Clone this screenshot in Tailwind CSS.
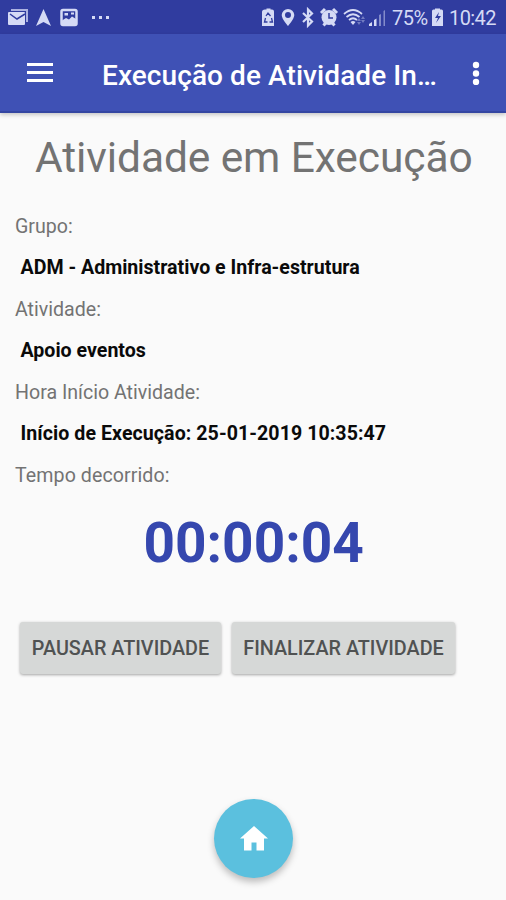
<!DOCTYPE html>
<html lang="pt-BR">
<head>
  <meta charset="UTF-8" />
  <meta name="viewport" content="width=device-width, initial-scale=1.0" />
  <title>Execução de Atividade</title>
  <script src="https://cdn.jsdelivr.net/npm/@tailwindcss/browser@4"></script>
</head>
<body class="bg-[#fafafa] font-['Roboto',sans-serif] whitespace-nowrap">
  <div class="relative w-[506px] h-[900px] overflow-hidden flex flex-col">

    <!-- Status bar -->
    <div class="h-[34px] shrink-0 bg-[#303c9f] text-[#d5daf5] flex items-center">
      <svg class="w-[120px] h-[34px]" viewBox="0 0 120 34" fill="currentColor">
        <path d="M11 9h17v13h-2V11H11z" opacity=".75" />
        <rect x="8" y="12" width="17" height="13" rx="1" />
        <path d="M10 14l7 5 8-5" fill="none" stroke="#303c9f" stroke-width="1.5" />
        <path d="M43.500 9l7.500 17-7.500-4-7.500 4z" />
        <rect x="61.500" y="10" width="15" height="15" rx="1.500" fill="none" stroke="currentColor" stroke-width="2.500" />
        <path d="M62 20.500l4-2.500 3 1.500 3-3 4 2.500v6H62z" />
        <path d="M64.500 13h3.500v2.500h-3.500zM71 12.500h3v2h-3z" />
        <rect x="92" y="16" width="3" height="3" />
        <rect x="99" y="16" width="3" height="3" />
        <rect x="106" y="16" width="3" height="3" />
      </svg>
      <svg class="ml-[140px] w-[130px] h-[34px]" viewBox="260 0 130 34" fill="currentColor">
        <path d="M265 9.500h1.500v-1h4v1h1.500q2 0 2 2V26h-12V12q0-2.500 3-2.500z" />
        <path d="M266 16l2-3 2.500 3M271.500 18l1 4h-3M267.500 22h-3l1-4" fill="none" stroke="#303c9f" stroke-width="1.300" />
        <path fill-rule="evenodd" d="M288 9a6.300 6.300 0 0 0-6.300 6c0 4 6.300 11 6.300 11s6.300-7 6.300-11a6.300 6.300 0 0 0-6.300-6zm0 3a3 3 0 1 1 0 6 3 3 0 0 1 0-6z" />
        <path d="M303 13l9 8.500-4 4V9.500l4 4-9 8.500" fill="none" stroke="currentColor" stroke-width="2.200" />
        <circle cx="329" cy="17.500" r="7.500" />
        <path d="M321 13l4-4M337 13l-4-4M323.500 25.500l2.500-3M334.500 25.500l-2.500-3" stroke="currentColor" stroke-width="3" />
        <path d="M329 13v5h4" fill="none" stroke="#303c9f" stroke-width="1.500" />
        <g fill="none" stroke="currentColor" stroke-width="1.700">
          <path d="M344 14q9-8 18 0M346.500 17q6.500-5.500 13 0M349 20q4-3.500 8 0" />
        </g>
        <path d="M350.500 22q2.500-2 5 0l-2.500 3z" />
        <path d="M359 18l2 3h-4zM359 25l-2-3h4zM363 16l2 3h-4zM363 23l-2-3h4z" opacity=".4" />
        <path d="M369 26v-2l3-2v4zM374 26v-6l2.500-1.500V26z" />
        <path d="M379 26V15l2-1v12zM383.500 26V11l1.500-1v16z" opacity=".5" />
      </svg>
      <span class="ml-[2px] w-[36px] pt-px text-[20px] tracking-[-0.5px]">75%</span>
      <svg class="ml-[3px] w-[14px] h-[34px]" viewBox="431 0 14 34" fill="currentColor">
        <path d="M435 9.500V8.500h5v1h1.500q1.500 0 1.500 1.500v15h-11V11q0-1.500 1.500-1.500z" />
        <path d="M439 12l-4 6h3l-2 5 5-7h-3z" fill="#303c9f" />
      </svg>
      <span class="ml-[4px] pt-px text-[20px] tracking-[-0.6px]">10:42</span>
    </div>

    <!-- Toolbar -->
    <header class="h-[79px] shrink-0 bg-[#3f51b5] text-white border-b-2 border-[#3446a2] shadow-[0_2px_4px_rgba(0,0,0,0.2)] flex items-center">
      <svg class="ml-[27px] w-[26px] h-[20px]" viewBox="0 0 26 20" fill="currentColor">
        <rect y="0" width="26" height="3" />
        <rect y="8" width="26" height="3" />
        <rect y="16" width="26" height="3" />
      </svg>
      <h1 class="ml-[49px] w-[338px] text-[28px] tracking-[0.08px] font-medium pt-[6px]">Execução de Atividade In…</h1>
      <svg class="ml-[32px] w-[8px] h-[24px]" viewBox="0 0 8 24" fill="currentColor">
        <circle cx="4" cy="4" r="3.200" />
        <circle cx="4" cy="12.500" r="3.200" />
        <circle cx="4" cy="21" r="3.200" />
      </svg>
    </header>

    <main class="flex flex-col text-[#737373]">
      <h2 class="pl-[35px] pt-[16px] h-[93px] text-[42.500px] tracking-[-0.1px] leading-[58px]">Atividade em Execução</h2>

      <dl class="pl-[15px] text-[19.600px]">
        <dt class="h-[41px] leading-[42px]">Grupo:</dt>
        <dd class="h-[42px] leading-[41px] pl-[5.500px] font-bold text-[#0a0a0a]">ADM - Administrativo e Infra-estrutura</dd>
        <dt class="h-[41px] leading-[42px]">Atividade:</dt>
        <dd class="h-[42px] leading-[41px] pl-[5.500px] font-bold text-[#0a0a0a]">Apoio eventos</dd>
        <dt class="h-[41px] leading-[42px]">Hora Início Atividade:</dt>
        <dd class="h-[42px] leading-[41px] pl-[5.500px] tracking-[0.06px] font-bold text-[#0a0a0a]">Início de Execução: 25-01-2019 10:35:47</dd>
        <dt class="h-[41px] leading-[42px] tracking-[0.08px]">Tempo decorrido:</dt>
      </dl>

      <p class="pt-[9px] h-[125px] pl-[143.500px] text-[55px] leading-[76px] font-bold text-[#3547ae]">00:00:04</p>

      <!-- Actions -->
      <div class="pl-[20px] pt-px flex gap-[11px] text-[19.800px] font-medium text-[#505252]">
        <button class="w-[201px] h-[52px] pt-[2px] rounded-[3px] bg-[#d6d8d7] shadow-[0_1px_3px_rgba(0,0,0,0.35)]">PAUSAR ATIVIDADE</button>
        <button class="w-[223px] h-[52px] pt-[2px] rounded-[3px] bg-[#d6d8d7] shadow-[0_1px_3px_rgba(0,0,0,0.35)]">FINALIZAR ATIVIDADE</button>
      </div>
    </main>

    <!-- Floating home button -->
    <button aria-label="Home" class="absolute left-[214px] top-[799px] size-[79px] rounded-full bg-[#5bc0de] shadow-[0_4px_7px_rgba(0,0,0,0.25)] flex items-center justify-center">
      <svg class="w-[28px] h-[25px] text-white" viewBox="0 0 28 25" fill="currentColor">
        <path d="M14 0L0 12.500h4V24.500h7.500V16.500h5V24.500H24V12.500h4z" />
      </svg>
    </button>
  </div>
</body>
</html>
